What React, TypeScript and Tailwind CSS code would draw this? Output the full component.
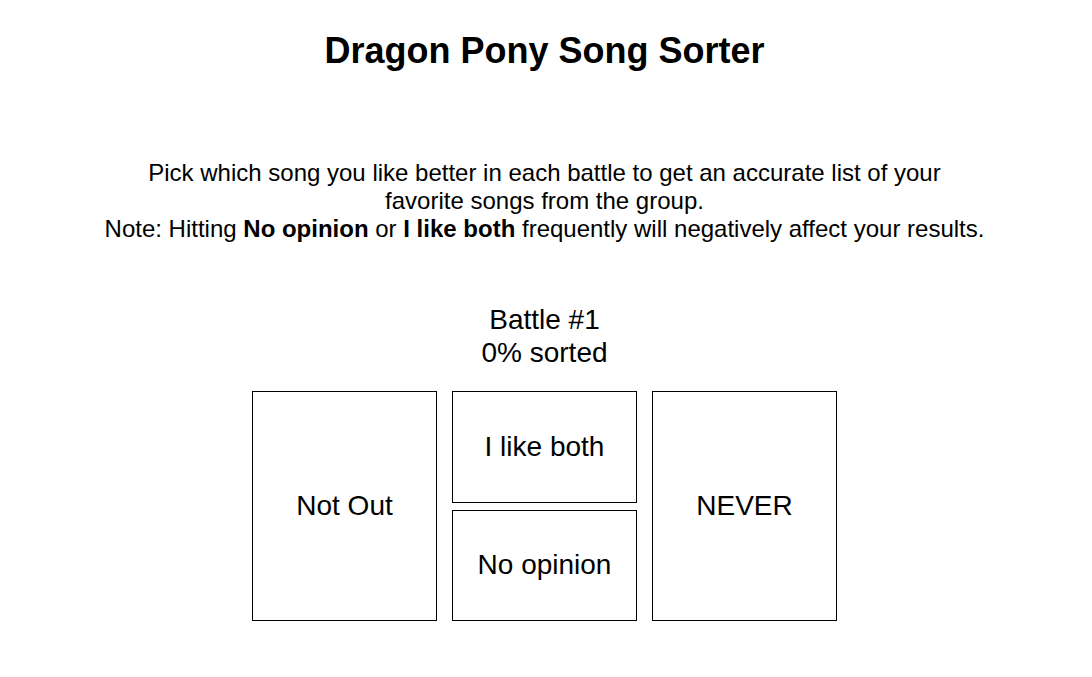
import React from "react";

const Choice: React.FC<{ label: string; className?: string }> = ({ label, className }) => {
    return (
        <button
            className={
                "w-[185px] border border-black bg-white flex items-center justify-center text-[28px] leading-[32px] text-black " +
                (className ?? "")
            }
        >
            {label}
        </button>
    );
};

const App: React.FC = () => {
    return (
        <div
            className="min-h-[677px] w-full bg-white text-black flex flex-col items-center pt-[30px] pr-[3px]"
            style={{ fontFamily: '"Liberation Sans", Arial, sans-serif' }}
        >
            <h1 className="text-[36px] leading-[41px] font-bold">Dragon Pony Song Sorter</h1>

            <div className="mt-[88px] text-[24px] leading-[28px] text-center">
                <p className="max-w-[830px] mx-auto">
                    Pick which song you like better in each battle to get an accurate list of your
                    favorite songs from the group.
                </p>
                <p>
                    Note: Hitting <b>No opinion</b> or <b>I like both</b> frequently will negatively
                    affect your results.
                </p>
            </div>

            <div className="mt-[60px] text-[28px] leading-[33px] text-center">
                <div>Battle #1</div>
                <div>0% sorted</div>
            </div>

            <div className="mt-[22px] flex gap-[15px] h-[230px]">
                <Choice label="Not Out" />
                <div className="flex flex-col gap-[7px] w-[185px]">
                    <Choice label="I like both" className="flex-1" />
                    <Choice label="No opinion" className="flex-1" />
                </div>
                <Choice label="NEVER" />
            </div>
        </div>
    );
};

export default App;
